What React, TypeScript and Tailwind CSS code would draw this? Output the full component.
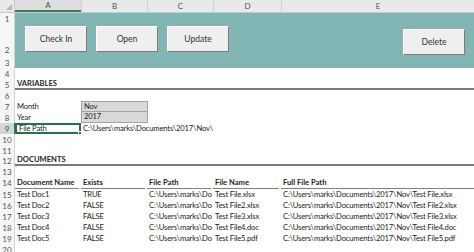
import React from 'react';

const font = { fontFamily: 'Lato, "Liberation Sans", sans-serif' };

interface RowProps {
  n: number;
  h: string;
  selected?: boolean;
  children?: React.ReactNode;
}

// one sheet row: row number at the left, cells after it
const Row: React.FC<RowProps> = ({ n, h, selected, children }) => (
  <div className={`flex ${h}`}>
    <div
      className={`w-[15px] shrink-0 flex items-center justify-center border-r text-[8px] tracking-normal ${
        selected ? 'bg-[#d6d6d6] border-[#3f7a57] text-[#2f5f43]' : 'bg-[#f6f6f6] border-[#d4d4d4] text-[#555]'
      }`}
    >
      {n}
    </div>
    <div className="flex flex-1 min-w-0">{children}</div>
  </div>
);

const Cell: React.FC<{ w: string; className?: string; children?: React.ReactNode }> = ({ w, className = '', children }) => (
  <div className={`${w} shrink-0 flex items-center pl-[2px] whitespace-nowrap ${className}`}>{children}</div>
);

const SheetButton: React.FC<{ label: string; className: string }> = ({ label, className }) => (
  <div
    className={`absolute w-[62px] h-[26px] flex items-center justify-center bg-[#efefef] text-[8.5px] tracking-normal text-[#333] border border-t-white border-l-white border-b-[#7d7d7d] border-r-[#7d7d7d] shadow-[1px_1px_0_#9aa] ${className}`}
  >
    {label}
  </div>
);

const docs = [
  { name: 'Test Doc1', exists: 'TRUE', file: 'Test File.xlsx' },
  { name: 'Test Doc2', exists: 'FALSE', file: 'Test File2.xlsx' },
  { name: 'Test Doc3', exists: 'FALSE', file: 'Test File3.xlsx' },
  { name: 'Test Doc4', exists: 'FALSE', file: 'Test File4.doc' },
  { name: 'Test Doc5', exists: 'FALSE', file: 'Test File5.pdf' },
];

const base = 'C:\\Users\\marks\\Documents\\2017\\Nov\\';
const heading = 'font-bold tracking-normal';

export default function App() {
  return (
    <div
      className="w-[474px] h-[252px] overflow-hidden bg-white text-[7.6px] tracking-[-0.15px] text-[#222]"
      style={font}
    >
      {/* Column headers */}
      <div className="flex h-[13px] bg-[#e9e9e9] border-b border-[#c8c8c8] text-[8px] tracking-normal text-[#555]">
        <div className="w-[15px] shrink-0 relative border-r border-[#c8c8c8]">
          <div className="absolute right-[2px] bottom-[2px] w-0 h-0 border-l-[6px] border-l-transparent border-b-[6px] border-b-[#b5b5b5]" />
        </div>
        <div className="w-[66px] shrink-0 flex items-center justify-center bg-[#dedede] border-b-2 border-[#3f7a57] text-[#2f5f43]">A</div>
        <div className="w-[66px] shrink-0 flex items-center justify-center border-l border-[#d0d0d0]">B</div>
        <div className="w-[66px] shrink-0 flex items-center justify-center border-l border-[#d0d0d0]">C</div>
        <div className="w-[68px] shrink-0 flex items-center justify-center border-l border-[#d0d0d0]">D</div>
        <div className="flex-1 flex items-center justify-center border-l border-[#d0d0d0]">E</div>
      </div>

      {/* Teal button band, rows 1-3 */}
      <div className="flex">
        <div className="w-[15px] shrink-0 flex flex-col border-r border-[#d4d4d4] bg-[#f6f6f6] text-[8px] tracking-normal text-[#555]">
          <div className="h-[11px] flex items-center justify-center">1</div>
          <div className="h-[33px] flex items-end justify-center pb-[1px]">2</div>
          <div className="h-[11px] flex items-center justify-center">3</div>
        </div>
        <div className="relative flex-1 h-[55px] bg-[#81b6b4]">
          <SheetButton label="Check In" className="left-[10px] top-[13px]" />
          <SheetButton label="Open" className="left-[81px] top-[13px]" />
          <SheetButton label="Update" className="left-[152px] top-[13px]" />
          <SheetButton label="Delete" className="left-[388px] top-[16px]" />
        </div>
      </div>

      <Row n={4} h="h-[11px]" />
      <Row n={5} h="h-[11px]">
        <div className={`flex-1 flex items-center pl-[2px] border-b-2 border-[#7a7a7a] ${heading}`}>VARIABLES</div>
      </Row>
      <Row n={6} h="h-[11px]" />
      <Row n={7} h="h-[11px]">
        <Cell w="w-[66px]">Month</Cell>
        <Cell w="w-[67px]" className="bg-[#d9d9d9] border border-[#a3a3a3]">Nov</Cell>
      </Row>
      <Row n={8} h="h-[11px]">
        <Cell w="w-[66px]">Year</Cell>
        <Cell w="w-[67px]" className="bg-[#d9d9d9] border border-t-0 border-[#a3a3a3]">2017</Cell>
      </Row>
      <Row n={9} h="h-[11px]" selected>
        <Cell w="w-[66px]" className="relative border-2 border-[#217346]">
          File Path
          <div className="absolute -right-[3px] -bottom-[3px] w-[4px] h-[4px] bg-[#217346] border border-white" />
        </Cell>
        <Cell w="w-[66px]">{base}</Cell>
      </Row>
      <Row n={10} h="h-[11px]" />
      <Row n={11} h="h-[11px]" />
      <Row n={12} h="h-[10px]">
        <div className={`flex-1 flex items-center pl-[2px] border-b-2 border-[#7a7a7a] ${heading}`}>DOCUMENTS</div>
      </Row>
      <Row n={13} h="h-[11px]" />
      <Row n={14} h="h-[12px]">
        <Cell w="w-[64px]" className={`mr-[2px] border-b border-[#808080] ${heading}`}>Document Name</Cell>
        <Cell w="w-[64px]" className={`mr-[2px] border-b border-[#808080] ${heading}`}>Exists</Cell>
        <Cell w="w-[64px]" className={`mr-[2px] border-b border-[#808080] ${heading}`}>File Path</Cell>
        <Cell w="w-[66px]" className={`mr-[2px] border-b border-[#808080] ${heading}`}>File Name</Cell>
        <div className={`flex-1 flex items-center pl-[2px] border-b border-[#808080] ${heading}`}>Full File Path</div>
      </Row>
      {docs.map((d, i) => (
        <Row key={d.name} n={15 + i} h="h-[11px]">
          <Cell w="w-[66px]">{d.name}</Cell>
          <Cell w="w-[66px]">{d.exists}</Cell>
          {/* the path spills into D and is cut where File Name starts */}
          <Cell w="w-[66px]">C:\Users\marks\Do</Cell>
          <Cell w="w-[68px]">{d.file}</Cell>
          <div className="flex-1 flex items-center pl-[2px] whitespace-nowrap">{base}{d.file}</div>
        </Row>
      ))}
      <Row n={20} h="h-[11px]" />
    </div>
  );
}
